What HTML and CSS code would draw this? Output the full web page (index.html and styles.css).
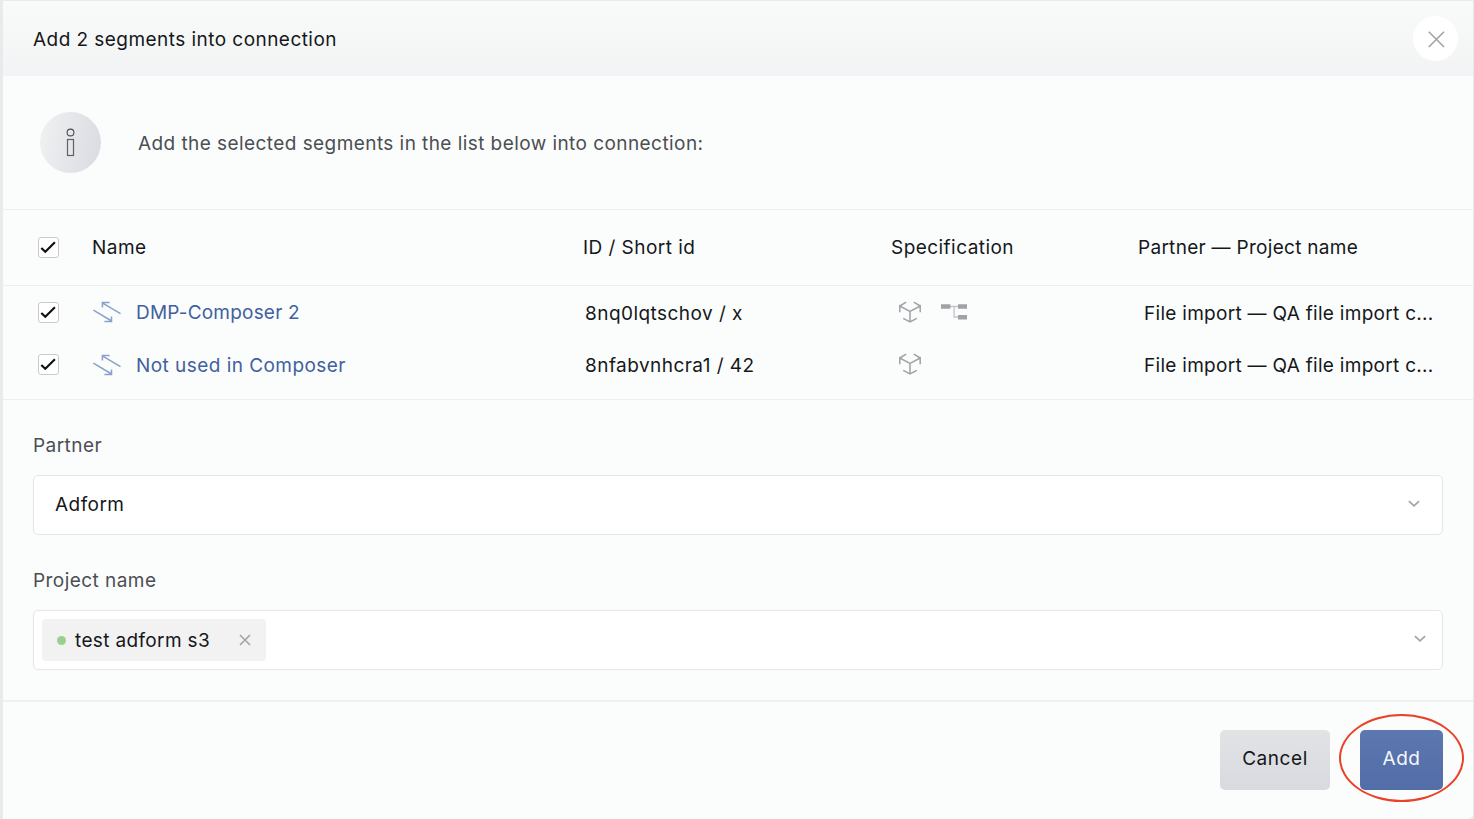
FILE: index.html
```html
<!DOCTYPE html>
<html lang="en">
<head>
  <meta charset="UTF-8">
  <meta name="viewport" content="width=device-width, initial-scale=1.0">
  <title>Add segments into connection</title>
  <link rel="stylesheet" href="styles.css">
</head>
<body>

  <!-- shared icons -->
  <svg class="sprite" width="0" height="0">
    <symbol id="check" viewBox="0 0 21 21">
      <path d="M3.3 10.9 L7.3 14.8 L16.9 5.2" fill="none" stroke="#0d0f12" stroke-width="2.1"/>
    </symbol>
    <symbol id="arrows" viewBox="0 0 28 22">
      <path d="M27.5 12.6 L9.3 1.8 M9.4 6.4 V1.5 H16.6 M0.4 9.2 L18.6 20 M18.5 15.4 V20.4 H11.4" fill="none" stroke="#8aa1cd" stroke-width="1.5"/>
    </symbol>
    <symbol id="cube" viewBox="0 0 24 24">
      <path d="M1.8 12.2 V6 L12 11.3 L22.2 6 V12.2 M1.8 6 L8.2 2.2 M22.2 6 L15.8 2.2 M12 11.3 V22 M5.2 18.4 L12 22 L18.8 18.4" fill="none" stroke="#a0a2a7" stroke-width="1.5"/>
    </symbol>
    <symbol id="tree" viewBox="0 0 28 18">
      <path d="M9 3.5 H18 M14.1 3.5 V14 H18" fill="none" stroke="#c3c5c8" stroke-width="1.3"/>
      <path d="M1 1.2 H10.4 V5.8 H1 Z M18 1.2 H27 V5.8 H18 Z M18 12 H27 V16.6 H18 Z" fill="#a0a2a7"/>
    </symbol>
    <symbol id="chevron" viewBox="0 0 12 8">
      <path d="M0.9 1.2 L6 5.9 L11.1 1.2" fill="none" stroke="#a0a2a6" stroke-width="1.6"/>
    </symbol>
  </svg>

  <div class="modal">
    <div class="modal-header">
      <h1>Add 2 segments into connection</h1>
      <button class="close">
        <svg width="18" height="18" viewBox="0 0 18 18"><path d="M1.8 1.8 L17 17 M17 1.8 L1.8 17" stroke="#a1a3a6" stroke-width="1.6"/></svg>
      </button>
    </div>

    <div class="info">
      <div class="info-icon">
        <svg width="9" height="30" viewBox="0 0 9 30">
          <circle cx="4.5" cy="4.5" r="3.4" fill="none" stroke="#4b4c51" stroke-width="1.1"/>
          <rect x="1.5" y="11.5" width="6" height="16" fill="none" stroke="#606166" stroke-width="1.2"/>
        </svg>
      </div>
      <p>Add the selected segments in the list below into connection:</p>
    </div>

    <div class="table">
      <div class="row head">
        <span class="checkbox"><svg width="21" height="21"><use href="#check"/></svg></span>
        <span class="name">Name</span>
        <span class="id">ID / Short id</span>
        <span class="spec">Specification</span>
        <span class="project">Partner — Project name</span>
      </div>
      <div class="row">
        <span class="checkbox"><svg width="21" height="21"><use href="#check"/></svg></span>
        <span class="name"><svg width="28" height="22"><use href="#arrows"/></svg><a class="tight">DMP-Composer 2</a></span>
        <span class="id">8nq0lqtschov / x</span>
        <span class="spec"><svg width="24" height="24"><use href="#cube"/></svg><svg width="28" height="18"><use href="#tree"/></svg></span>
        <span class="project">File import — QA file import c...</span>
      </div>
      <div class="row last">
        <span class="checkbox"><svg width="21" height="21"><use href="#check"/></svg></span>
        <span class="name"><svg width="28" height="22"><use href="#arrows"/></svg><a>Not used in Composer</a></span>
        <span class="id">8nfabvnhcra1 / 42</span>
        <span class="spec"><svg width="24" height="24"><use href="#cube"/></svg></span>
        <span class="project">File import — QA file import c...</span>
      </div>
    </div>

    <div class="form">
      <label>Partner</label>
      <div class="select">
        <span>Adform</span>
        <svg width="12" height="8"><use href="#chevron"/></svg>
      </div>
      <label>Project name</label>
      <div class="select multi">
        <div class="tag">
          <i class="dot"></i>
          <span>test adform s3</span>
          <svg width="12" height="12" viewBox="0 0 12 12"><path d="M1 1 L11 11 M11 1 L1 11" stroke="#a3a3a5" stroke-width="1.6"/></svg>
        </div>
        <svg width="12" height="8"><use href="#chevron"/></svg>
      </div>
    </div>

    <div class="modal-footer">
      <button class="btn cancel">Cancel</button>
      <div class="add-wrap">
        <button class="btn add">Add</button>
        <div class="highlight"></div>
      </div>
    </div>
  </div>

</body>
</html>
```
FILE: styles.css
```css
* {
  margin: 0;
  padding: 0;
  box-sizing: border-box;
}

body {
  font-family: Inter, "Liberation Sans", sans-serif;
  font-size: 19px;
  line-height: 24px;
  letter-spacing: 0.45px;
  color: #15171b;
  background-color: #e9eaec;
  height: 819px;
  padding: 1px 1px 0 3px;
  overflow: hidden;
}

.sprite {
  position: absolute;
}

svg {
  display: block;
  flex: none;
}

button {
  font: inherit;
  letter-spacing: inherit;
  border: none;
  cursor: pointer;
}

.modal {
  height: 818px;
  background-color: #fbfdfc;
  border-radius: 0 0 5px 0;
}

.modal-header {
  display: flex;
  justify-content: space-between;
  align-items: center;
  height: 75px;
  padding: 0 15px 0 30px;
  background: linear-gradient(#f9fbfa, #f2f3f4);
}

h1 {
  padding-top: 2px;
  font-size: 19px;
  font-weight: 400;
}

.close {
  display: flex;
  justify-content: center;
  align-items: center;
  width: 45px;
  height: 45px;
  border-radius: 50%;
  background-color: #fff;
}

.info {
  display: flex;
  align-items: center;
  gap: 37px;
  height: 134px;
  padding-left: 37px;
  border-bottom: 1px solid #edefef;
  color: #4c4e54;
}

.info p {
  padding-top: 2px;
  letter-spacing: 0.43px;
}

.info-icon {
  display: flex;
  justify-content: center;
  align-items: center;
  width: 61px;
  height: 61px;
  border-radius: 50%;
  background: linear-gradient(100deg, #f0f1f2, #dadbe1);
}

.table {
  height: 190px;
  border-bottom: 1px solid #edefef;
}

.row {
  display: grid;
  grid-template-columns: 55px 492px 313px 245px 1fr;
  align-items: center;
  height: 53px;
  padding-left: 35px;
}

.row.last {
  height: 52px;
}

.row.head {
  grid-template-columns: 54px 491px 308px 247px 1fr;
  height: 76px;
  border-bottom: 1px solid #edefef;
}

.checkbox {
  width: 21px;
  height: 21px;
  border: 1px solid #c9cacc;
  border-radius: 3px;
  background-color: #fff;
}

.last .checkbox {
  margin-bottom: 2px;
}

.checkbox svg {
  margin: -1px;
}

.name,
.spec {
  display: flex;
  align-items: center;
}

.name {
  gap: 15px;
}

.name svg {
  margin-bottom: 1px;
}

.name a {
  color: #41609f;
}

.name a.tight {
  letter-spacing: 0.2px;
}

.row:not(.head) .id,
.row:not(.head) .project,
.last a {
  padding-top: 2px;
}

.spec {
  gap: 18px;
}

.spec svg {
  margin-bottom: 2px;
}

.project {
  padding-left: 1px;
  letter-spacing: 0.29px;
}

.head .project {
  padding-left: 0;
}

.form {
  height: 302px;
  padding: 34px 30px 0;
  border-bottom: 2px solid #eff1f1;
}

label {
  display: block;
  margin-bottom: 17px;
  color: #4c4e54;
}

.select {
  display: flex;
  justify-content: space-between;
  align-items: center;
  height: 60px;
  margin-bottom: 34px;
  padding: 0 22px 0 21px;
  border: 1px solid #e5e7e7;
  border-radius: 5px;
  background-color: #fff;
}

.select > svg {
  margin-bottom: 2px;
}

.select.multi {
  padding: 0 16px 0 8px;
}

.tag {
  display: flex;
  align-items: center;
  width: 224px;
  height: 42px;
  padding: 0 15px;
  border-radius: 4px;
  background-color: #f2f2f3;
  letter-spacing: 0.36px;
}

.tag span {
  flex: 1;
  margin-left: 9px;
  padding-top: 2px;
}

.dot {
  width: 9px;
  height: 9px;
  border-radius: 50%;
  background-color: #9ad08f;
}

.modal-footer {
  display: flex;
  justify-content: flex-end;
  gap: 30px;
  padding: 28px 30px 0 0;
}

.btn {
  display: block;
  height: 60px;
  padding-bottom: 3px;
  border-radius: 5px;
  letter-spacing: 0.55px;
}

.cancel {
  width: 110px;
  color: #15171b;
  background: linear-gradient(#e2e3e5, #d9dae0);
}

.add-wrap {
  position: relative;
}

.add {
  width: 83px;
  color: #f4f6fa;
  background: linear-gradient(#5d78b0, #526da7);
}

/* red ring around the Add button */
.highlight {
  position: absolute;
  left: -21px;
  top: -16px;
  width: 125px;
  height: 88px;
  border: 2px solid #ea4127;
  border-radius: 50%;
  pointer-events: none;
}
```
